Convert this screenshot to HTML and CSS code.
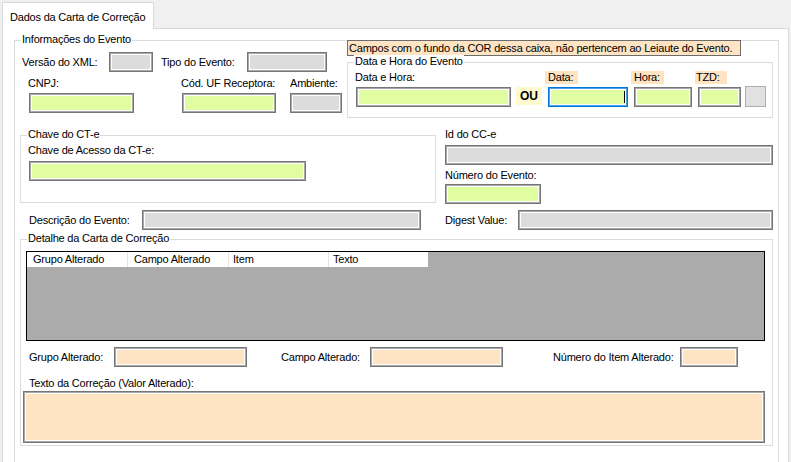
FILE: index.html
```html
<!DOCTYPE html>
<html lang="pt-BR">
<head>
<meta charset="utf-8">
<title>Dados da Carta de Correção</title>
<link rel="stylesheet" href="styles.css">
</head>
<body>
<div class="tabbar"><div class="tab">Dados da Carta de Correção</div></div>
<div class="page">
  <div class="group g-info">
    <span class="legend">Informações do Evento</span>
    <div class="top">
      <div class="top-left">
        <div class="row-a">
          <span class="lbl l-versao">Versão do XML:</span>
          <span class="tb gray t-versao"></span>
          <span class="lbl l-tipo">Tipo do Evento:</span>
          <span class="tb gray t-tipo"></span>
        </div>
        <div class="row-b">
          <div class="fcol c-cnpj"><span class="lbl nudge">CNPJ:</span><span class="tb green t-cnpj"></span></div>
          <div class="fcol c-uf"><span class="lbl nudge">Cód. UF Receptora:</span><span class="tb green t-uf"></span></div>
          <div class="fcol c-amb"><span class="lbl">Ambiente:</span><span class="tb gray t-amb"></span></div>
        </div>
      </div>
      <div class="top-right">
        <div class="note">Campos com o fundo da COR dessa caixa, não pertencem ao Leiaute do Evento.</div>
        <div class="group g-data">
          <span class="legend">Data e Hora do Evento</span>
          <div class="data-row">
            <div class="fcol c-dh"><span class="lbl">Data e Hora:</span><span class="tb green t-dh"></span></div>
            <span class="ou">OU</span>
            <div class="fcol c-data"><span class="lbl peach w33">Data:</span><span class="tb green focus t-data"><i class="caret"></i></span></div>
            <div class="fcol c-hora"><span class="lbl peach w33">Hora:</span><span class="tb green t-hora"></span></div>
            <div class="fcol c-tzd"><span class="lbl peach tzd">TZD:</span><span class="tb green t-tzd"></span></div>
            <span class="btn"></span>
          </div>
        </div>
      </div>
    </div>
    <div class="mid">
      <div class="group g-chave">
        <span class="legend">Chave do CT-e</span>
        <span class="lbl l-chave">Chave de Acesso da CT-e:</span>
        <span class="tb green t-chave"></span>
      </div>
      <div class="col-right">
        <span class="lbl l-id">Id do CC-e</span>
        <span class="tb gray t-id"></span>
        <span class="lbl l-num">Número do Evento:</span>
        <span class="tb green t-num"></span>
      </div>
    </div>
    <div class="desc-row">
      <span class="lbl l-desc">Descrição do Evento:</span>
      <span class="tb gray t-desc"></span>
      <span class="lbl l-dig">Digest Value:</span>
      <span class="tb gray t-dig"></span>
    </div>
    <div class="group g-det">
      <span class="legend">Detalhe da Carta de Correção</span>
      <div class="grid">
        <div class="grid-head">
          <span class="gh gh1">Grupo Alterado</span>
          <span class="gh gh2">Campo Alterado</span>
          <span class="gh gh3">Item</span>
          <span class="gh gh4">Texto</span>
        </div>
      </div>
      <div class="det-row">
        <span class="lbl l-grupo">Grupo Alterado:</span>
        <span class="tb peach-box t-grupo"></span>
        <span class="lbl l-campo">Campo Alterado:</span>
        <span class="tb peach-box t-campo"></span>
        <span class="lbl l-item">Número do Item Alterado:</span>
        <span class="tb peach-box t-item"></span>
      </div>
      <span class="lbl l-texto">Texto da Correção (Valor Alterado):</span>
      <span class="tb peach-box t-texto"></span>
    </div>
  </div>
</div>
</body>
</html>
```

FILE: styles.css
```css
* { box-sizing: border-box; }
html, body { margin: 0; height: 100%; }
body {
  background: #f0f0f0;
  font-family: "Liberation Sans", Arial, sans-serif;
  font-size: 11px;
  letter-spacing: -0.2px;
  color: #000;
  overflow: hidden;
}

/* tab strip */
.tabbar { height: 28px; padding: 2px 0 0 2px; display: flex; }
.tab {
  position: relative;
  z-index: 1;
  width: 152px;
  height: 27px;
  background: #fff;
  border: 1px solid #d9d9d9;
  border-bottom: none;
  padding: 8px 0 0 7px;
  line-height: 13px;
  white-space: nowrap;
}
.page {
  width: 787px;
  height: 440px;
  margin-left: 2px;
  background: #fff;
  border: 1px solid #d9d9d9;
  padding: 11px 0 0 11px;
}

/* generic */
.group { position: relative; border: 1px solid #dcdcdc; }
.legend {
  position: absolute;
  top: -8px;
  left: 6px;
  padding: 0 1px;
  background: #fff;
  line-height: 13px;
  white-space: nowrap;
}
.lbl { display: block; line-height: 13px; height: 13px; white-space: nowrap; flex: none; }
.tb {
  display: block;
  flex: none;
  height: 20px;
  border: 1px solid #767676;
  box-shadow: inset 0 0 0 1px #a8a8a8, inset 0 0 0 2px #fff;
}
.green { background: #e0fda1; }
.gray { background: #dcdcdc; }
.peach-box { background: #ffe4c4; }
.focus {
  border-color: #0078d7;
  box-shadow: inset 0 0 0 1px #4f9fe0, inset 0 0 0 2px #fff;
  display: flex;
  justify-content: flex-end;
  align-items: center;
  padding-right: 2px;
}
.caret { display: block; width: 1px; height: 12px; background: #000; }
.fcol { display: flex; flex-direction: column; align-items: flex-start; flex: none; }

/* Informações do Evento */
.g-info { width: 765px; height: 430px; }
.top { display: flex; }
.top-left { width: 332px; flex: none; }
.row-a { display: flex; align-items: center; height: 20px; margin-top: 11px; }
.l-versao { margin-left: 7px; width: 87px; }
.t-versao { width: 44px; }
.l-tipo { margin-left: 8px; width: 86px; }
.t-tipo { width: 80px; }

.row-b { display: flex; margin-top: 5px; }
.row-b .tb { margin-top: 3px; }
.nudge { margin-left: -1px; }
.c-cnpj { margin-left: 14px; }
.t-cnpj { width: 105px; }
.c-uf { margin-left: 48px; }
.t-uf { width: 94px; }
.c-amb { margin-left: 14px; }
.t-amb { width: 52px; }

.top-right { width: 426px; flex: none; }
.note {
  margin-top: -1px;
  width: 394px;
  height: 16px;
  background: #ffe4c4;
  border: 1px solid #6d6d6d;
  padding-left: 1px;
  line-height: 14px;
  white-space: nowrap;
}
.g-data { margin-top: 6px; width: 426px; height: 56px; }
.data-row { display: flex; align-items: flex-start; margin-top: 8px; }
.data-row .tb { margin-top: 3px; margin-left: 3px; }
.c-dh { margin-left: 7px; }
.c-dh .tb { margin-left: 1px; }
.t-dh { width: 155px; }
.ou {
  flex: none;
  margin: 16px 0 0 5px;
  width: 26px;
  height: 18px;
  line-height: 18px;
  text-align: center;
  font-weight: bold;
  font-size: 12px;
  letter-spacing: 0;
  background: #fffacd;
}
.peach { background: #ffe4c4; padding-left: 3px; }
.w33 { width: 33px; }
.tzd { width: 32px; padding-left: 1px; }
.c-data, .c-hora, .c-tzd { margin-left: 3px; }
.t-data { width: 80px; }
.t-hora { width: 58px; }
.t-tzd { width: 43px; }
.btn {
  flex: none;
  display: block;
  margin: 15px 0 0 4px;
  width: 21px;
  height: 21px;
  background: #e1e1e1;
  border: 1px solid #adadad;
}

/* Chave / Id */
.mid { display: flex; align-items: flex-start; }
.g-chave { flex: none; margin: 17px 0 0 5px; width: 416px; height: 68px; }
.l-chave { margin: 8px 0 0 7px; }
.t-chave { margin: 4px 0 0 8px; width: 277px; }
.col-right { flex: none; margin-left: 9px; width: 328px; }
.l-id { margin-top: 10px; }
.t-id { margin-top: 4px; width: 328px; }
.l-num { margin-top: 4px; }
.t-num { margin-top: 2px; width: 96px; }

.desc-row { display: flex; align-items: center; height: 20px; margin-top: 6px; }
.l-desc { margin-left: 14px; width: 113px; }
.t-desc { width: 279px; }
.l-dig { margin-left: 24px; width: 73px; }
.t-dig { width: 255px; }

/* Detalhe */
.g-det { margin: 9px 0 0 5px; width: 753px; height: 207px; }
.grid {
  margin: 11px 0 0 5px;
  width: 739px;
  height: 90px;
  background: #ababab;
  border: 1px solid #000;
}
.grid-head { display: flex; width: 401px; height: 15px; background: #fff; }
.gh {
  display: block;
  flex: none;
  line-height: 15px;
  border-right: 1px solid #e5e5e5;
  white-space: nowrap;
}
.gh1 { width: 101px; padding-left: 6px; }
.gh2 { width: 101px; padding-left: 6px; }
.gh3 { width: 100px; padding-left: 4px; }
.gh4 { width: 99px; padding-left: 4px; border-right: none; }

.det-row { display: flex; align-items: center; height: 20px; margin-top: 6px; }
.l-grupo { margin-left: 8px; width: 85px; }
.t-grupo { width: 133px; }
.l-campo { margin-left: 34px; width: 89px; }
.t-campo { width: 133px; }
.l-item { margin-left: 50px; width: 127px; }
.t-item { width: 58px; }
.l-texto { margin: 10px 0 0 8px; }
.t-texto { margin: 1px 0 0 2px; width: 742px; height: 52px; }
```
